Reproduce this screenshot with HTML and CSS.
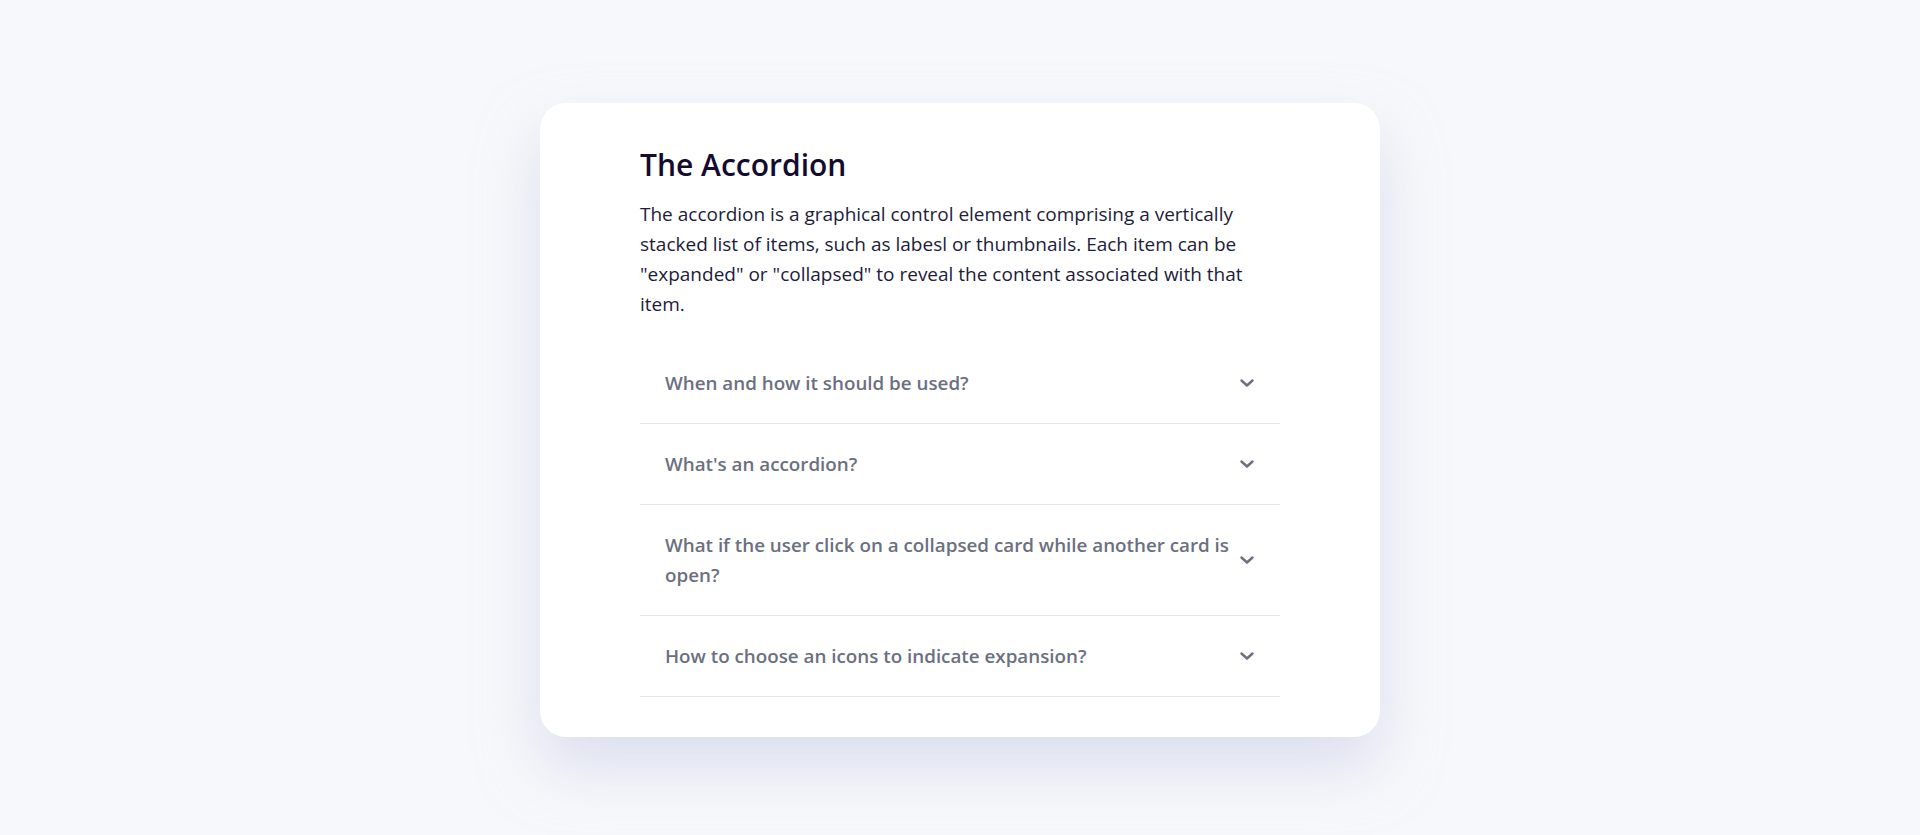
FILE: index.html
```html
<!DOCTYPE html>
<html lang="en">
<head>
<meta charset="utf-8">
<title>The Accordion</title>
<link rel="stylesheet" href="styles.css">
</head>
<body>
<main class="page">
  <section class="card">
    <h1 class="title">The Accordion</h1>
    <p class="intro">The accordion is a graphical control element comprising a vertically stacked list of items, such as labesl or thumbnails. Each item can be "expanded" or "collapsed" to reveal the content associated with that item.</p>
    <div class="accordion">
      <div class="item">
        <span class="question">When and how it should be used?</span>
        <svg class="chevron" viewBox="0 0 14 8" width="14" height="8"><path d="M1.5 1.5 L7 6.5 L12.5 1.5" fill="none" stroke="currentColor" stroke-width="2.4" stroke-linecap="round" stroke-linejoin="round"/></svg>
      </div>
      <div class="item">
        <span class="question">What's an accordion?</span>
        <svg class="chevron" viewBox="0 0 14 8" width="14" height="8"><path d="M1.5 1.5 L7 6.5 L12.5 1.5" fill="none" stroke="currentColor" stroke-width="2.4" stroke-linecap="round" stroke-linejoin="round"/></svg>
      </div>
      <div class="item">
        <span class="question">What if the user click on a collapsed card while another card is open?</span>
        <svg class="chevron" viewBox="0 0 14 8" width="14" height="8"><path d="M1.5 1.5 L7 6.5 L12.5 1.5" fill="none" stroke="currentColor" stroke-width="2.4" stroke-linecap="round" stroke-linejoin="round"/></svg>
      </div>
      <div class="item">
        <span class="question">How to choose an icons to indicate expansion?</span>
        <svg class="chevron" viewBox="0 0 14 8" width="14" height="8"><path d="M1.5 1.5 L7 6.5 L12.5 1.5" fill="none" stroke="currentColor" stroke-width="2.4" stroke-linecap="round" stroke-linejoin="round"/></svg>
      </div>
    </div>
  </section>
</main>
</body>
</html>
```

FILE: styles.css
```css
* { box-sizing: border-box; }
html, body { margin: 0; padding: 0; }
body {
  background: #f7f8fb;
  font-family: "Open Sans", "Noto Sans", sans-serif;
  color: #1b1530;
}
.page {
  min-height: 835px;
  display: flex;
  justify-content: center;
  align-items: flex-start;
  padding-top: 103px;
}
.card {
  width: 840px;
  background: #ffffff;
  border-radius: 26px;
  padding: 32px 100px 40px 100px;
  box-shadow: 0 30px 60px rgba(196, 203, 230, 0.55);
}
.title {
  margin: 0;
  font-size: 30px;
  font-weight: 600;
  line-height: 60px;
  color: #140c2e;
}
.intro {
  margin: 4px 0 24px;
  font-size: 19px;
  line-height: 30px;
  color: #221c3a;
}
.accordion { display: flex; flex-direction: column; }
.item {
  display: flex;
  align-items: center;
  justify-content: space-between;
  gap: 6px;
  padding: 25px 26px 25px 25px;
  border-bottom: 1px solid #e5e6ea;
}
.question {
  font-size: 18.8px;
  line-height: 30px;
  font-weight: 600;
  color: #6b7080;
}
.chevron {
  flex: none;
  color: #6b7080;
}
```
